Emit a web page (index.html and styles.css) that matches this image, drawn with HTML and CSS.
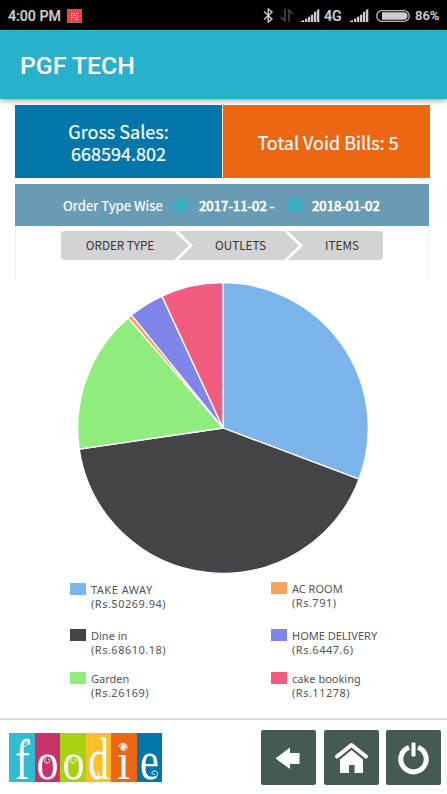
FILE: index.html
```html
<!DOCTYPE html>
<html lang="en">
<head>
    <meta charset="UTF-8">
    <meta name="viewport" content="width=device-width, initial-scale=1.0">
    <title>PGF TECH</title>
    <link rel="stylesheet" href="styles.css">
</head>
<body>

    <div class="status-bar">
        <span class="clock">4:00 PM</span>
        <svg class="notice" width="15" height="14" viewBox="0 0 15 14">
            <rect x="0.5" y="0.5" width="14" height="13" fill="#ee4540" stroke="#85766f"/>
            <path d="M4 4.500h2M7 4.500h1M9 4.500h2M4 6.500h1M6 6.500h3M10 6.500h1M4 8.500h2M7 8.500h1M9 8.500h2M4 10.500h1M8 10.500h3" stroke="#fbd9d4" stroke-width="1"/>
        </svg>
        <svg class="bluetooth" width="11" height="15" viewBox="0 0 11 15">
            <path d="M1 3.500L9 11L5.300 14V1L9 4L1 11.500" fill="none" stroke="#ccc" stroke-width="1.400"/>
        </svg>
        <svg class="data" width="14" height="13" viewBox="0 0 14 13">
            <path d="M5 0v12L1 8M9 13V1l4 4" fill="none" stroke="#404040" stroke-width="1.800"/>
        </svg>
        <svg class="signal" width="19" height="13" viewBox="0 0 19 13">
            <path d="M0 13v-1l3-1v2zM4 13v-3l2.300-.7V13zM7 13V8l2.300-.8V13zM10 13V6l2.300-.8V13zM13 13V3l2.300-.8V13zM16 13V0.800l2.300-.8V13z" fill="#ccc"/>
        </svg>
        <span class="network">4G</span>
        <svg class="signal" width="19" height="13" viewBox="0 0 19 13">
            <path d="M0 13v-1l3-1v2zM4 13v-3l2.300-.7V13zM7 13V8l2.300-.8V13zM10 13V6l2.300-.8V13zM13 13V3l2.300-.8V13zM16 13V0.800l2.300-.8V13z" fill="#ccc"/>
        </svg>
        <svg class="battery" width="34" height="12" viewBox="0 0 34 12">
            <rect x="0.700" y="0.700" width="32.600" height="10.600" rx="5.300" fill="none" stroke="#bbb" stroke-width="1.300"/>
            <path d="M6 2.300h21.500q4 0 4 3.700t-4 3.700H6z" fill="#ccc"/>
        </svg>
        <span class="percent">86%</span>
    </div>

    <header class="app-bar">
        <h1>PGF TECH</h1>
    </header>

    <main>
        <div class="totals">
            <div class="total sales">Gross Sales: 668594.802</div>
            <div class="total void">Total Void Bills: 5</div>
        </div>

        <section class="report">
            <div class="report-head">
                <span class="report-title">Order Type Wise</span>
                <svg class="calendar" width="15" height="14" viewBox="0 0 15 14">
                    <rect width="15" height="14" rx="1.500" fill="#38b1c5"/>
                    <path d="M2 5h11M2 8h11M2 11h11M5 4v8M10 4v8" stroke="#43aabf" stroke-width="1"/>
                </svg>
                <span class="date date-from">2017-11-02 -</span>
                <svg class="calendar" width="14" height="14" viewBox="0 0 15 14">
                    <rect width="15" height="14" rx="1.500" fill="#38b1c5"/>
                    <path d="M2 5h11M2 8h11M2 11h11M5 4v8M10 4v8" stroke="#43aabf" stroke-width="1"/>
                </svg>
                <span class="date">2018-01-02</span>
            </div>
            <nav class="steps">
                <a class="step first">ORDER TYPE</a>
                <a class="step middle">OUTLETS</a>
                <a class="step last">ITEMS</a>
            </nav>
        </section>

        <svg class="pie" width="292" height="292" viewBox="-146 -146 292 292">
            <g stroke="#fff" stroke-width="1.300" stroke-linejoin="round">
                <path fill="#7cb5ec" d="M0 0V-145.300A145.300 145.300 0 0 1 135.970 51.220Z"/>
                <path fill="#434348" d="M0 0L135.970 51.220A145.300 145.300 0 0 1 -143.760 21.100Z"/>
                <path fill="#90ed7d" d="M0 0L-143.760 21.100A145.300 145.300 0 0 1 -94.850 -110.070Z"/>
                <path fill="#f7a35c" d="M0 0L-94.850 -110.070A145.300 145.300 0 0 1 -91.460 -112.900Z"/>
                <path fill="#8085e9" d="M0 0L-91.460 -112.900A145.300 145.300 0 0 1 -60.990 -131.880Z"/>
                <path fill="#f15c80" d="M0 0L-60.990 -131.880A145.300 145.300 0 0 1 0 -145.300Z"/>
            </g>
        </svg>

        <div class="legend">
            <div class="column">
                <div class="item"><i class="swatch blue"></i><div><span class="wide">TAKE AWAY</span><br><span class="wide">(Rs.50269.94)</span></div></div>
                <div class="item"><i class="swatch dark"></i><div>Dine in<br><span class="wide">(Rs.68610.18)</span></div></div>
                <div class="item"><i class="swatch green"></i><div>Garden<br><span class="wide">(Rs.26169)</span></div></div>
            </div>
            <div class="column right">
                <div class="item"><i class="swatch orange"></i><div>AC ROOM<br><span class="wide">(Rs.791)</span></div></div>
                <div class="item"><i class="swatch purple"></i><div>HOME DELIVERY<br><span class="wide">(Rs.6447.6)</span></div></div>
                <div class="item"><i class="swatch pink"></i><div>cake booking<br><span class="wide">(Rs.11278)</span></div></div>
            </div>
        </div>
    </main>

    <footer class="bottom-bar">
        <svg class="logo" width="153" height="49" viewBox="0 0 153 49">
            <rect width="26" height="49" fill="#31bdd0"/>
            <rect x="26" width="25" height="49" fill="#c7336b"/>
            <rect x="51" width="26" height="49" fill="#a9d10f"/>
            <rect x="77" width="25" height="49" fill="#fdc029"/>
            <rect x="102" width="26" height="49" fill="#ec6614"/>
            <rect x="128" width="25" height="49" fill="#0275aa"/>
            <g class="logo-text">
                <text x="6" y="46" font-size="58" textLength="15" lengthAdjust="spacingAndGlyphs">f</text>
                <text x="27.5" y="46" font-size="53" textLength="22" lengthAdjust="spacingAndGlyphs">o</text>
                <text x="53.5" y="46" font-size="53" textLength="22" lengthAdjust="spacingAndGlyphs">o</text>
                <text x="79" y="46" font-size="59" textLength="21" lengthAdjust="spacingAndGlyphs">d</text>
                <text x="108" y="46" font-size="53" textLength="13" lengthAdjust="spacingAndGlyphs">i</text>
                <text x="131" y="46" font-size="54" textLength="19" lengthAdjust="spacingAndGlyphs">e</text>
            </g>
            <!-- curls on the letters -->
            <g fill="none" stroke="#fff" stroke-width="1">
                <path d="M19 8c1 5-6 7-6 3s5-3 3 0"/>
                <path d="M37 24c-2 2-2 6 1 6s4-4 1-4"/>
                <path d="M63 24c-2 2-2 6 1 6s4-4 1-4"/>
                <path d="M88 45c-4-1-3-7 0-6s2 4 0 4"/>
                <path d="M110 14c0-5 8-5 8 0s-7 4-6 1 4-2 3 0"/>
                <path d="M146 44c4-1 3-7-1-6s-1 5 1 3"/>
            </g>
        </svg>
        <div class="buttons">
            <button class="btn" aria-label="Back">
                <svg width="55" height="55" viewBox="0 0 55 55">
                    <path d="M14.500 28.500L29 17.500V23h9.500v11H29v5z" fill="#fff"/>
                </svg>
            </button>
            <button class="btn" aria-label="Home">
                <svg width="55" height="55" viewBox="0 0 55 55">
                    <path d="M16 29.500L27.500 20L39 29.500V43H30.500V35H25V43H16z" fill="#fff"/>
                    <path d="M12.500 27L27.500 15.500L42.500 27" fill="none" stroke="#445a55" stroke-width="6" stroke-linejoin="round"/>
                    <path d="M13 26.500L27.500 15L42 26.500" fill="none" stroke="#fff" stroke-width="4" stroke-linecap="round" stroke-linejoin="round"/>
                </svg>
            </button>
            <button class="btn" aria-label="Power">
                <svg width="55" height="55" viewBox="0 0 55 55">
                    <path d="M23 17.300A12.700 12.700 0 1 0 32 17.300" fill="none" stroke="#fff" stroke-width="5"/>
                    <rect x="25.500" y="12.500" width="4" height="14" rx="1" fill="#fff"/>
                </svg>
            </button>
        </div>
    </footer>

</body>
</html>
```

FILE: styles.css
```css
* {
    box-sizing: border-box;
}

body {
    margin: 0;
    width: 447px;
    height: 794px;
    overflow: hidden;
    display: flex;
    flex-direction: column;
    background-color: #fff;
    font-family: "Noto Sans CJK SC", "Noto Sans", sans-serif;
}

svg {
    display: block;
    flex: none;
}

.status-bar {
    display: flex;
    align-items: center;
    height: 30px;
    padding: 1px 0 0 8px;
    background-color: #000;
    color: #ccc;
    font: 500 14.2px/28px Roboto, sans-serif;
    -webkit-text-stroke: 0.2px #ccc;
    white-space: nowrap;
}

.status-bar span {
    flex: none;
}

.clock {
    width: 59px;
}

.bluetooth {
    margin-left: 181px;
}

.data {
    margin-left: 6px;
}

.status-bar .signal {
    margin-left: 7px;
}

.network {
    width: 20px;
    margin-left: 4px;
}

.network + .signal {
    margin-left: 6px;
}

.battery {
    margin-left: 7px;
}

.percent {
    margin-left: 5px;
    font-size: 13px;
}

.app-bar {
    position: relative;
    height: 69px;
    flex: none;
    padding-left: 20px;
    background-color: #29b0ca;
    box-shadow: 0 2px 5px rgba(0, 0, 0, 0.35);
}

h1 {
    margin: 0;
    color: #fff;
    font: 500 24.8px/71px Roboto, sans-serif;
}

main {
    height: 619px;
    flex: none;
    padding: 6px 17px 0 15px;
}

.totals {
    display: grid;
    grid-template-columns: 207px 207px;
    column-gap: 1px;
    height: 73px;
}

.total {
    display: flex;
    align-items: center;
    justify-content: center;
    color: #fff;
    font-size: 18px;
    line-height: 22px;
    text-align: center;
    -webkit-text-stroke: 0.2px #fff;
}

.sales {
    padding: 0 50px;
    background-color: #0275aa;
}

.void {
    padding-left: 3px;
    background-color: #ec6614;
}

.report {
    width: 414px;
    height: 96px;
    margin-top: 6px;
    border: 1px solid #eee;
    border-width: 0 1px;
}

.report-head {
    display: flex;
    align-items: center;
    height: 42px;
    margin: 0 -1px;
    padding-left: 48px;
    background-color: #689cb4;
    color: #fff;
    font-size: 13.2px;
    white-space: nowrap;
}

.report-title {
    width: 110px;
    -webkit-text-stroke: 0.2px #fff;
}

.date {
    margin-left: 11px;
    -webkit-text-stroke: 0.7px #fff;
}

.date-from {
    width: 88px;
}

.steps {
    display: flex;
    width: 322px;
    height: 29px;
    margin: 5px 0 0 45px;
    color: #333;
    font-size: 11.7px;
    line-height: 28px;
    text-align: center;
}

.step {
    background-color: #d3d3d3;
}

.first {
    width: 128px;
    padding-right: 10px;
    border-radius: 4px 0 0 4px;
    clip-path: polygon(0 0, 113px 0, 128px 50%, 113px 100%, 0 100%);
}

.middle {
    width: 125px;
    margin-left: -11px;
    clip-path: polygon(0 0, 106px 0, 121px 50%, 106px 100%, 0 100%, 15px 50%);
}

.last {
    width: 95px;
    margin-left: -15px;
    padding-left: 13px;
    border-radius: 0 4px 4px 0;
    clip-path: polygon(0 0, 100% 0, 100% 100%, 0 100%, 15px 50%);
}

.pie {
    margin: 2px 0 0 62px;
}

.legend {
    display: grid;
    grid-template-columns: 201px 150px;
    margin: 9px 0 0 55px;
    color: #555;
    font: 11px/14px "Noto Sans", sans-serif;
    white-space: nowrap;
}

.item {
    display: flex;
    gap: 5px;
    height: 46px;
}

.item:nth-child(2) {
    height: 43px;
}

.right {
    margin-top: -1px;
}

.right .item:first-child {
    height: 47px;
}

.wide {
    letter-spacing: 0.5px;
}

.swatch {
    width: 16px;
    height: 12px;
}

.blue { background-color: #7cb5ec; }
.dark { background-color: #434348; }
.green { background-color: #90ed7d; }
.orange { background-color: #f7a35c; }
.purple { background-color: #8085e9; }
.pink { background-color: #f15c80; }

.bottom-bar {
    display: flex;
    justify-content: space-between;
    height: 76px;
    padding: 12px 6px 0 9px;
    border-top: 2px solid #ddd;
}

.logo {
    margin-top: 1px;
    overflow: visible;
}

.logo-text {
    fill: #fff;
    font-family: "Liberation Serif", serif;
}

.buttons {
    display: flex;
    gap: 7.5px;
    margin-top: -2px;
}

.btn {
    width: 55px;
    height: 55px;
    padding: 0;
    border: 0;
    border-radius: 2px;
    background-color: #445a55;
}
```
